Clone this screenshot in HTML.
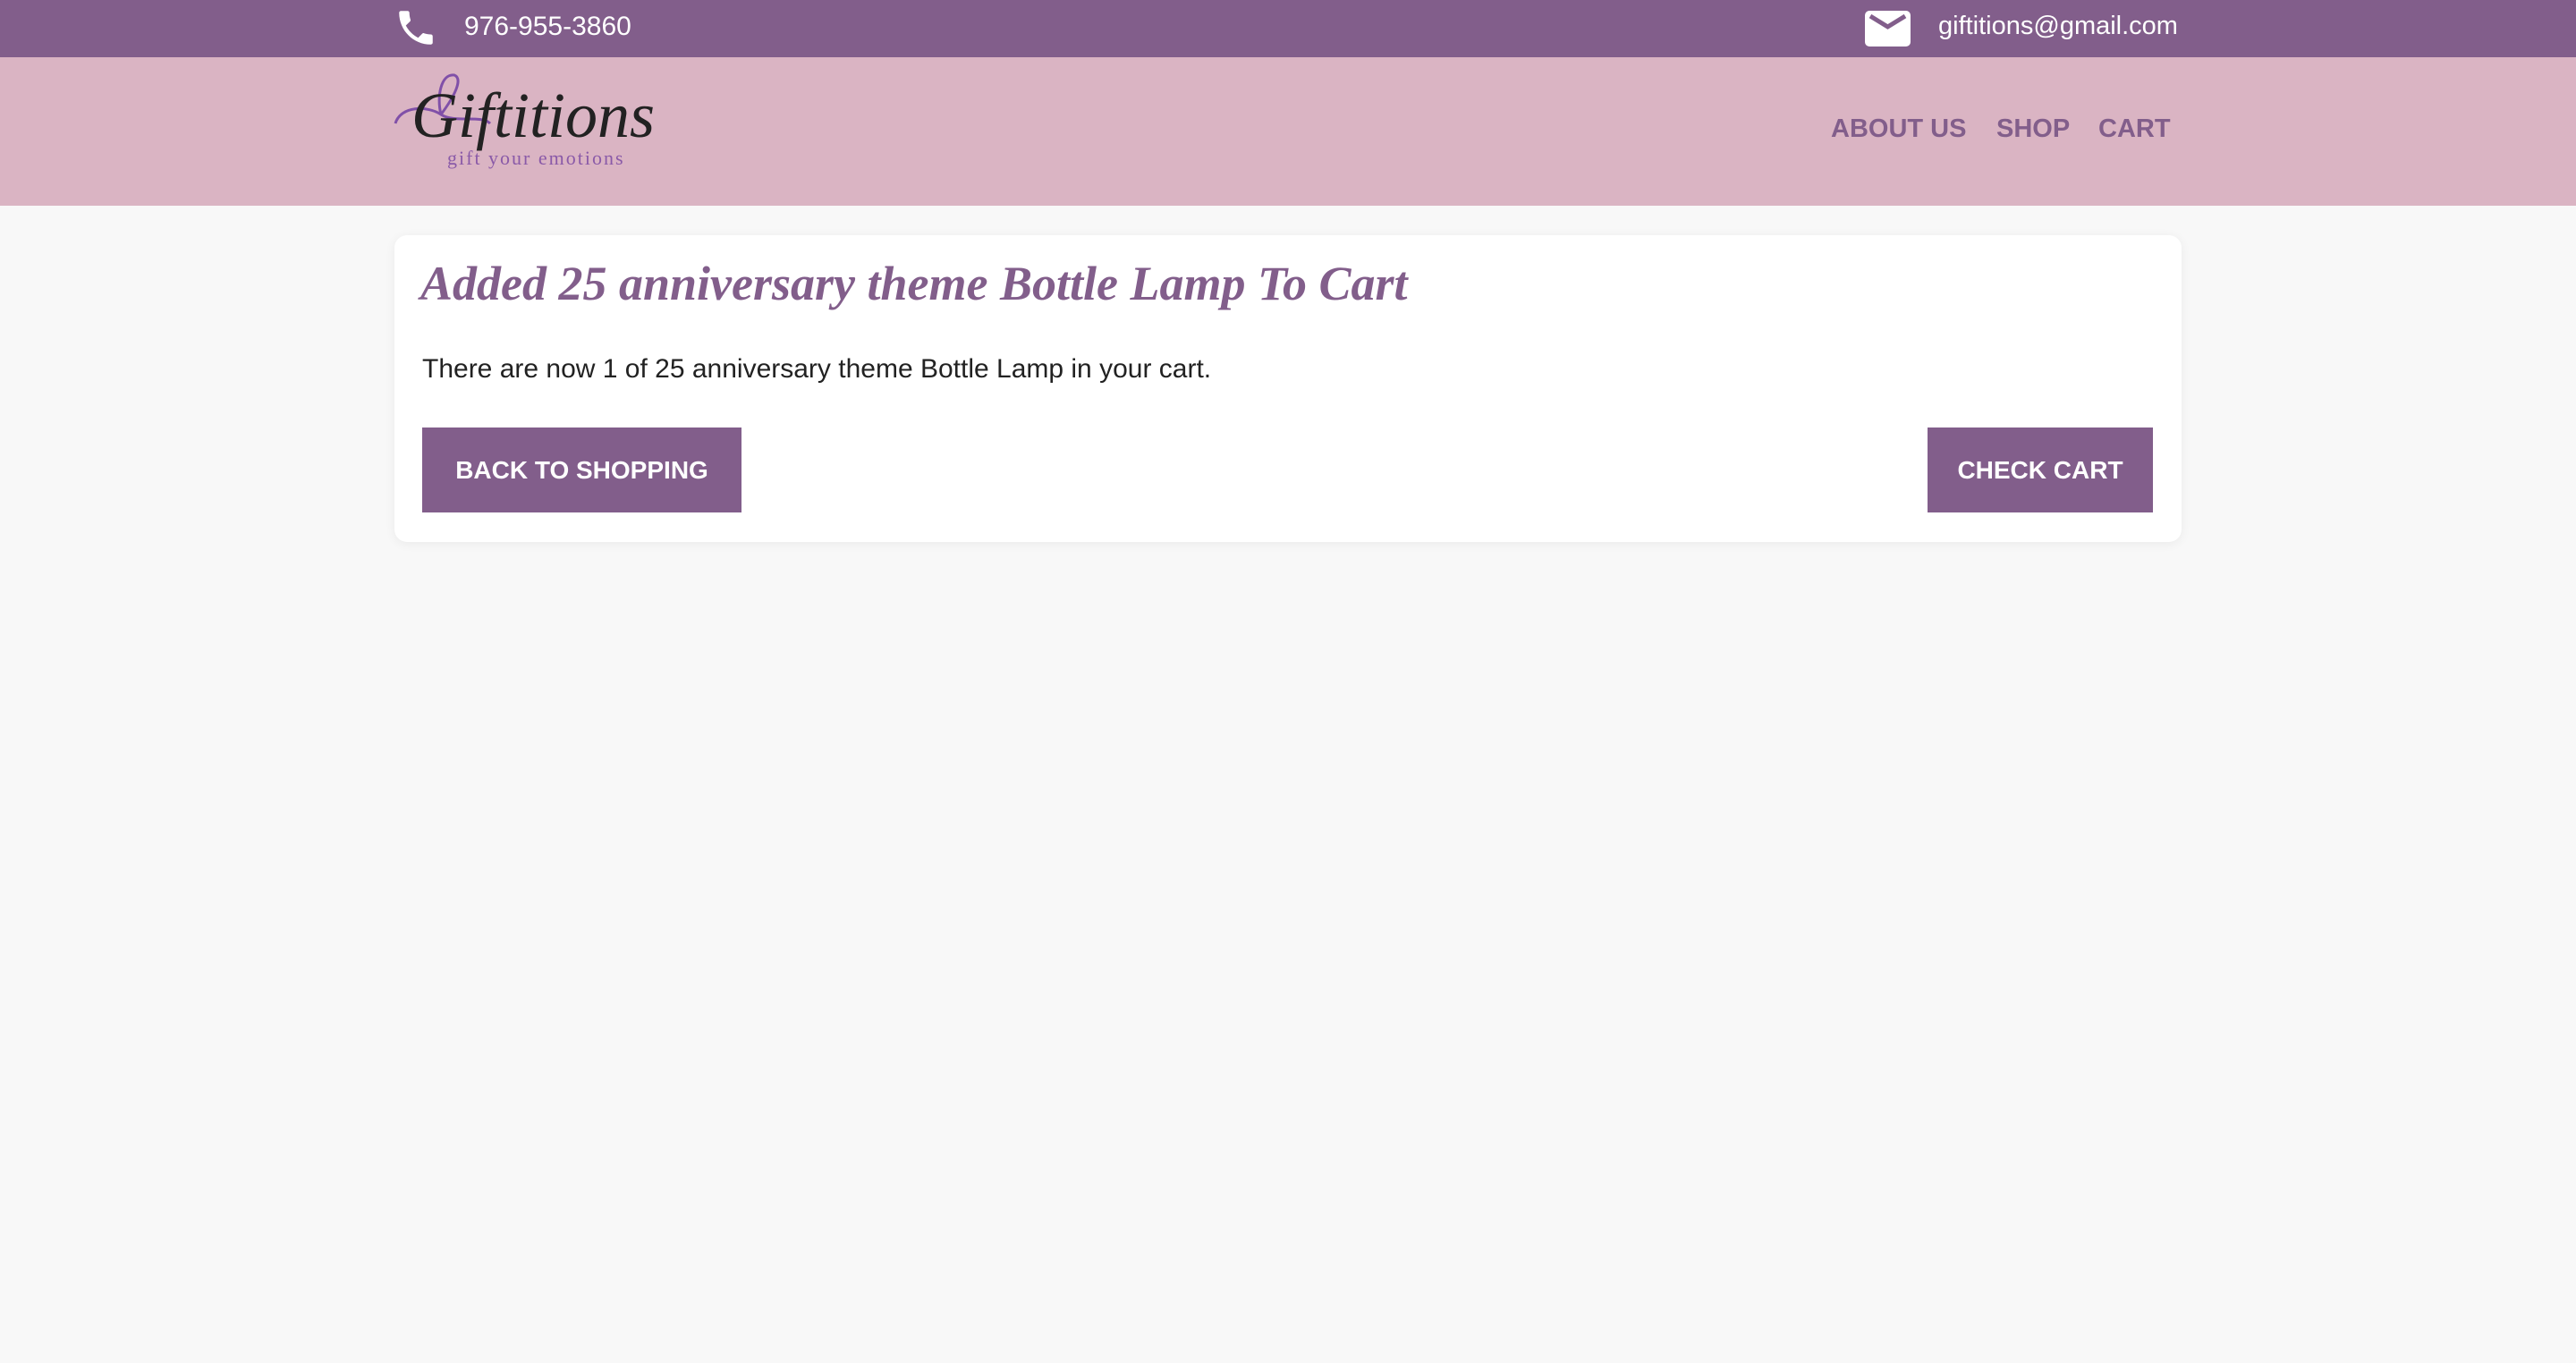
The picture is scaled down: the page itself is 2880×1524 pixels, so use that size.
<!DOCTYPE html>
<html><head><meta charset="utf-8"><style>
*{margin:0;padding:0;box-sizing:border-box}
body{width:2880px;height:1524px;background:#f8f8f8;font-family:"Liberation Sans",sans-serif;position:relative;overflow:hidden}
.top{position:absolute;left:0;top:0;width:2880px;height:64px;background:#825e8b}
.hdr{position:absolute;left:0;top:64px;width:2880px;height:166px;background:#dab4c3}
.t{position:absolute;white-space:nowrap}
.nav{color:#825e8b;font-weight:bold;font-size:29px;top:128px}
.card{position:absolute;left:441px;top:263px;width:1998px;height:343px;background:#fff;border-radius:14px;box-shadow:0 2px 12px rgba(0,0,0,.06)}
.btn{position:absolute;top:478px;height:95px;background:#825e8b;color:#fff;font-weight:bold;font-size:28px;display:flex;align-items:center;justify-content:center}
</style></head><body>
<div class="top"></div>
<svg style="position:absolute;left:440px;top:6px" width="50" height="50" viewBox="0 0 24 24"><path fill="#fff" d="M6.6 10.8c1.4 2.8 3.8 5.1 6.6 6.6l2.2-2.2c.3-.3.7-.4 1-.2 1.1.4 2.300.6 3.6.6.6 0 1 .4 1 1V20c0 .6-.4 1-1 1C10.600 21 3 13.4 3 4c0-.6.4-1 1-1h3.5c.6 0 1 .4 1 1 0 1.3.2 2.5.6 3.6.1.3 0 .7-.2 1L6.6 10.8z"/></svg>
<div class="t" style="left:519px;top:13px;color:#fff;font-size:30px">976-955-3860</div>
<svg style="position:absolute;left:2085px;top:12px" width="51" height="40" viewBox="0 0 51 40"><rect width="51" height="40" rx="5" fill="#fff"/><path d="M6 6 L25.5 18 L45 6" stroke="#825e8b" stroke-width="5" fill="none"/></svg>
<div class="t" style="left:2167px;top:13px;color:#fff;font-size:29px">giftitions@gmail.com</div>
<div class="hdr"></div>
<svg style="position:absolute;left:438px;top:78px" width="305" height="112" viewBox="0 0 305 112">
<path d="M4 60 C10 40 40 40 55 50 C70 30 80 10 70 6 C55 4 50 30 55 50 C70 60 100 50 110 60" stroke="#8050a8" stroke-width="3" fill="none"/>
<text x="22" y="75" font-family="Liberation Serif,serif" font-style="italic" font-size="72" fill="#222">Giftitions</text>
<text x="62" y="106" font-family="Liberation Serif,serif" font-size="22" fill="#8a5aa8" letter-spacing="2">gift your emotions</text>
</svg>
<div class="t nav" style="left:2047px">ABOUT US</div>
<div class="t nav" style="left:2232px">SHOP</div>
<div class="t nav" style="left:2346px">CART</div>
<div class="card"></div>
<div class="t" style="left:470px;top:286px;color:#825e8b;font-family:'Liberation Serif',serif;font-style:italic;font-weight:bold;font-size:54px">Added 25 anniversary theme Bottle Lamp To Cart</div>
<div class="t" style="left:472px;top:396px;color:#222;font-size:30px">There are now 1 of 25 anniversary theme Bottle Lamp in your cart.</div>
<div class="btn" style="left:472px;width:357px">BACK TO SHOPPING</div>
<div class="btn" style="left:2155px;width:252px">CHECK CART</div>
</body></html>
